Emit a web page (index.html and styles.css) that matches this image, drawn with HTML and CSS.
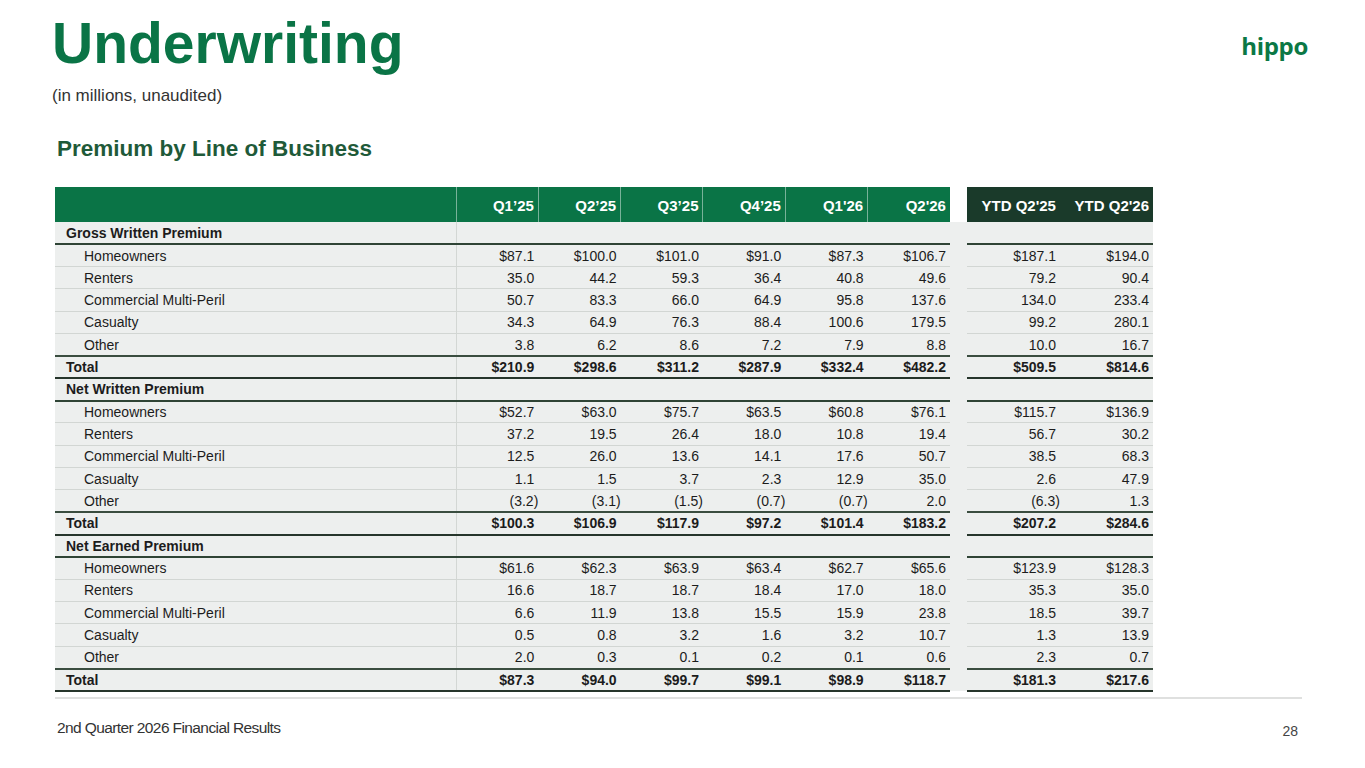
FILE: index.html
```html
<!DOCTYPE html>
<html lang="en">
<head>
<meta charset="utf-8">
<title>Underwriting</title>
<link rel="stylesheet" href="styles.css">
</head>
<body>
<div class="slide">
  <header class="top">
    <h1 class="title">Underwriting</h1>
    <div class="logo">hippo</div>
  </header>
  <p class="subtitle">(in millions, unaudited)</p>
  <h2 class="section-title">Premium by Line of Business</h2>

  <div class="table-wrap">
    <table class="lob">
      <colgroup>
        <col class="c-label">
        <col class="c-q"><col class="c-q"><col class="c-q"><col class="c-q"><col class="c-q"><col class="c-q">
        <col class="c-gap">
        <col class="c-ytd"><col class="c-ytd">
      </colgroup>
      <thead>
        <tr>
          <th class="lbl"></th>
          <th>Q1’25</th><th>Q2’25</th><th>Q3’25</th><th>Q4’25</th><th>Q1'26</th><th class="qlast">Q2'26</th>
          <th class="gap"></th>
          <th class="ytd">YTD Q2'25</th><th class="ytd">YTD Q2'26</th>
        </tr>
      </thead>
      <tbody>
        <tr class="sec"><td class="lbl">Gross Written Premium</td><td></td><td></td><td></td><td></td><td></td><td></td><td class="gap"></td><td></td><td></td></tr>
        <tr class="item"><td class="lbl">Homeowners</td><td>$87.1</td><td>$100.0</td><td>$101.0</td><td>$91.0</td><td>$87.3</td><td>$106.7</td><td class="gap"></td><td>$187.1</td><td>$194.0</td></tr>
        <tr class="item"><td class="lbl">Renters</td><td>35.0</td><td>44.2</td><td>59.3</td><td>36.4</td><td>40.8</td><td>49.6</td><td class="gap"></td><td>79.2</td><td>90.4</td></tr>
        <tr class="item"><td class="lbl">Commercial Multi-Peril</td><td>50.7</td><td>83.3</td><td>66.0</td><td>64.9</td><td>95.8</td><td>137.6</td><td class="gap"></td><td>134.0</td><td>233.4</td></tr>
        <tr class="item"><td class="lbl">Casualty</td><td>34.3</td><td>64.9</td><td>76.3</td><td>88.4</td><td>100.6</td><td>179.5</td><td class="gap"></td><td>99.2</td><td>280.1</td></tr>
        <tr class="item last"><td class="lbl">Other</td><td>3.8</td><td>6.2</td><td>8.6</td><td>7.2</td><td>7.9</td><td>8.8</td><td class="gap"></td><td>10.0</td><td>16.7</td></tr>
        <tr class="total"><td class="lbl">Total</td><td>$210.9</td><td>$298.6</td><td>$311.2</td><td>$287.9</td><td>$332.4</td><td>$482.2</td><td class="gap"></td><td>$509.5</td><td>$814.6</td></tr>

        <tr class="sec"><td class="lbl">Net Written Premium</td><td></td><td></td><td></td><td></td><td></td><td></td><td class="gap"></td><td></td><td></td></tr>
        <tr class="item"><td class="lbl">Homeowners</td><td>$52.7</td><td>$63.0</td><td>$75.7</td><td>$63.5</td><td>$60.8</td><td>$76.1</td><td class="gap"></td><td>$115.7</td><td>$136.9</td></tr>
        <tr class="item"><td class="lbl">Renters</td><td>37.2</td><td>19.5</td><td>26.4</td><td>18.0</td><td>10.8</td><td>19.4</td><td class="gap"></td><td>56.7</td><td>30.2</td></tr>
        <tr class="item"><td class="lbl">Commercial Multi-Peril</td><td>12.5</td><td>26.0</td><td>13.6</td><td>14.1</td><td>17.6</td><td>50.7</td><td class="gap"></td><td>38.5</td><td>68.3</td></tr>
        <tr class="item"><td class="lbl">Casualty</td><td>1.1</td><td>1.5</td><td>3.7</td><td>2.3</td><td>12.9</td><td>35.0</td><td class="gap"></td><td>2.6</td><td>47.9</td></tr>
        <tr class="item last"><td class="lbl">Other</td><td class="neg">(3.2)</td><td class="neg">(3.1)</td><td class="neg">(1.5)</td><td class="neg">(0.7)</td><td class="neg">(0.7)</td><td>2.0</td><td class="gap"></td><td class="neg">(6.3)</td><td>1.3</td></tr>
        <tr class="total"><td class="lbl">Total</td><td>$100.3</td><td>$106.9</td><td>$117.9</td><td>$97.2</td><td>$101.4</td><td>$183.2</td><td class="gap"></td><td>$207.2</td><td>$284.6</td></tr>

        <tr class="sec"><td class="lbl">Net Earned Premium</td><td></td><td></td><td></td><td></td><td></td><td></td><td class="gap"></td><td></td><td></td></tr>
        <tr class="item"><td class="lbl">Homeowners</td><td>$61.6</td><td>$62.3</td><td>$63.9</td><td>$63.4</td><td>$62.7</td><td>$65.6</td><td class="gap"></td><td>$123.9</td><td>$128.3</td></tr>
        <tr class="item"><td class="lbl">Renters</td><td>16.6</td><td>18.7</td><td>18.7</td><td>18.4</td><td>17.0</td><td>18.0</td><td class="gap"></td><td>35.3</td><td>35.0</td></tr>
        <tr class="item"><td class="lbl">Commercial Multi-Peril</td><td>6.6</td><td>11.9</td><td>13.8</td><td>15.5</td><td>15.9</td><td>23.8</td><td class="gap"></td><td>18.5</td><td>39.7</td></tr>
        <tr class="item"><td class="lbl">Casualty</td><td>0.5</td><td>0.8</td><td>3.2</td><td>1.6</td><td>3.2</td><td>10.7</td><td class="gap"></td><td>1.3</td><td>13.9</td></tr>
        <tr class="item last"><td class="lbl">Other</td><td>2.0</td><td>0.3</td><td>0.1</td><td>0.2</td><td>0.1</td><td>0.6</td><td class="gap"></td><td>2.3</td><td>0.7</td></tr>
        <tr class="total"><td class="lbl">Total</td><td>$87.3</td><td>$94.0</td><td>$99.7</td><td>$99.1</td><td>$98.9</td><td>$118.7</td><td class="gap"></td><td>$181.3</td><td>$217.6</td></tr>
      </tbody>
    </table>
  </div>

  <div class="rule"></div>

  <footer class="footer">
    <span class="foot-text">2nd Quarter 2026 Financial Results</span>
    <span class="page-num">28</span>
  </footer>
</div>
</body>
</html>
```

FILE: styles.css
```css
html, body {
  margin: 0;
  padding: 0;
  background: #ffffff;
}

body {
  font-family: "Liberation Sans", Arial, sans-serif;
  color: #1c1c1c;
}

.slide {
  width: 1365px;
  height: 768px;
  overflow: hidden;
  background: #ffffff;
}

/* ---------- header ---------- */
.top {
  display: flex;
  justify-content: space-between;
  align-items: flex-start;
  padding: 15px 57px 0 52px;
}

.title {
  margin: 0;
  font-size: 57px;
  line-height: 57px;
  font-weight: 700;
  color: #0a7446;
}

.logo {
  margin-top: 19px;
  font-family: "Open Sans", "Liberation Sans", sans-serif;
  font-weight: 700;
  font-size: 24px;
  line-height: 24px;
  letter-spacing: -0.3px;
  color: #0b7845;
}

.subtitle {
  margin: 15px 0 0 52px;
  font-size: 17px;
  line-height: 17px;
  color: #333333;
}

.section-title {
  margin: 34px 0 0 57px;
  font-size: 22.5px;
  line-height: 22.5px;
  font-weight: 700;
  color: #1f5a39;
}

/* ---------- table ---------- */
.table-wrap {
  margin: 26.5px 0 0 55px;
}

table.lob {
  border-collapse: collapse;
  table-layout: fixed;
  width: 1098px;
  font-size: 14px;
}

.c-label { width: 401px; }
.c-q { width: 82.33px; }
.c-gap { width: 17px; }
.c-ytd { width: 93px; }

table.lob th {
  height: 35px;
  padding: 2px 4px 0 0;
  box-sizing: border-box;
  background: #0a7446;
  color: #ffffff;
  font-size: 15px;
  font-weight: 700;
  text-align: right;
  vertical-align: middle;
  white-space: nowrap;
  border-left: 1px solid rgba(255, 255, 255, 0.45);
}

table.lob th.lbl {
  border-left: none;
}

table.lob th.gap {
  background: #ffffff;
  border-left: none;
}

table.lob th.ytd {
  background: #1a3a2a;
  border-left: none;
}

table.lob td {
  height: 22.33px;
  padding: 0 4px 0 0;
  box-sizing: border-box;
  background: #edefee;
  text-align: right;
  vertical-align: middle;
  white-space: nowrap;
  line-height: 16px;
}

table.lob td.lbl {
  text-align: left;
  padding-left: 29px;
  border-right: 1px solid #d3d7d4;
}

table.lob td.neg {
  padding-right: 0;
}

table.lob tr.sec td.lbl,
table.lob tr.total td.lbl {
  padding-left: 11px;
}

table.lob tr.sec td,
table.lob tr.total td {
  font-weight: 700;
}

table.lob tr.sec td:not(.gap) {
  border-bottom: 2px solid #2f4435;
}

table.lob tr.item td:not(.gap) {
  border-bottom: 1px solid #d2d6d3;
}

table.lob tr.item.last td:not(.gap) {
  border-bottom: 2px solid #3a4d3f;
}

table.lob tr.total td:not(.gap) {
  border-bottom: 2px solid #26352b;
}

/* ---------- footer ---------- */
.rule {
  margin: 5px 0 0 55px;
  width: 1247px;
  height: 2px;
  background: #dfe0df;
}

.footer {
  display: flex;
  justify-content: space-between;
  align-items: flex-start;
  padding: 21px 67px 0 57px;
}

.foot-text {
  font-size: 15.5px;
  line-height: 15.5px;
  letter-spacing: -0.6px;
  color: #333333;
}

.page-num {
  margin-top: 4px;
  font-size: 14px;
  line-height: 14px;
  color: #444444;
}
```
